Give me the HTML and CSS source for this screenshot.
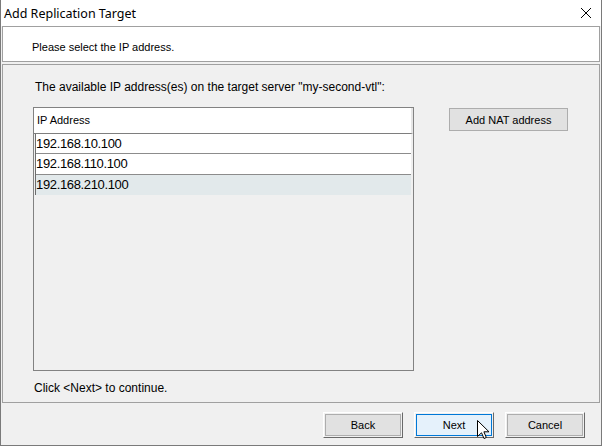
FILE: index.html
```html
<!DOCTYPE html>
<html lang="en">
<head>
  <meta charset="UTF-8" />
  <meta name="viewport" content="width=device-width, initial-scale=1.0"/>
  <title>Add Replication Target</title>
  <link rel="stylesheet" href="styles.css">
</head>
<body>
  <div class="window">
    <div class="titlebar">
      <div class="title">Add Replication Target</div>
      <div class="close">
        <svg width="12" height="12" viewBox="0 0 12 12">
          <path d="M1 1 L11 11 M11 1 L1 11" stroke="#000" stroke-width="1" fill="none"/>
        </svg>
      </div>
    </div>

    <div class="content">
      <div class="header-box">
        <div class="header-text">Please select the IP address.</div>
      </div>

      <div class="main-panel">
        <div class="intro">The available IP address(es) on the target server "my-second-vtl":</div>

        <div class="list-row">
          <div class="list">
            <div class="list-head">IP Address</div>
            <div class="rows">
              <div class="row">192.168.10.100</div>
              <div class="row">192.168.110.100</div>
              <div class="row selected">192.168.210.100</div>
            </div>
          </div>
          <button class="btn nat-btn">Add NAT address</button>
        </div>

        <div class="hint">Click &lt;Next&gt; to continue.</div>
      </div>

      <div class="footer">
        <button class="btn">Back</button>
        <button class="btn primary">Next</button>
        <button class="btn">Cancel</button>
      </div>
    </div>

    <svg class="cursor" width="13" height="20" viewBox="0 0 13 20">
      <path d="M0.5 0.5 L0.5 16.5 L4.5 12.8 L7 18.5 L9.3 17.5 L6.9 11.8 L12 11.8 Z" fill="#fff" stroke="#000" stroke-width="1" stroke-linejoin="miter"/>
    </svg>
  </div>
</body>
</html>
```

FILE: styles.css
```css
body {
  margin: 0;
  background: #f0f0f0;
  font-family: 'Liberation Sans', Arial, sans-serif;
  font-size: 11px;
  color: #000;
}

.window {
  position: relative;
  width: 602px;
  height: 446px;
  box-sizing: border-box;
  border: 1px solid #7a7a7a;
  border-top: none;
  background: #f0f0f0;
  overflow: hidden;
}

.titlebar {
  height: 26px;
  background: #fff;
  display: flex;
  align-items: center;
  justify-content: space-between;
  margin: 0 -1px;
  padding: 0 10px 0 4px;
}

.title {
  font-family: 'Noto Sans', sans-serif;
  font-size: 12.5px;
}

.close {
  display: flex;
  align-items: center;
  width: 12px;
  height: 12px;
}

.content {
  padding: 0 1px;
}

.header-box {
  height: 36px;
  box-sizing: border-box;
  border: 1px solid #a0a0a0;
  background: #fff;
  display: flex;
  align-items: center;
  padding: 5px 0 0 29px;
}

.header-text {
  font-size: 11px;
}

.main-panel {
  margin-top: 2px;
  height: 339px;
  box-sizing: border-box;
  border: 1px solid #a0a0a0;
  padding: 16px 0 0 30px;
}

.intro {
  margin-left: 2px;
  font-size: 12px;
  line-height: 13px;
}

.list-row {
  display: flex;
  align-items: flex-start;
  margin-top: 13px;
}

.list {
  width: 381px;
  height: 264px;
  box-sizing: border-box;
  border: 1px solid #828282;
  background: #f0f0f0;
}

.list-head {
  height: 25px;
  line-height: 25px;
  background: #fff;
  border-right: 2px solid #e6e6e6;
  border-bottom: 1px solid #7e7e7e;
  padding-left: 3px;
}

.rows {
  margin-left: 1px;
  margin-right: 2px;
  border-left: 1px solid #6e6e6e;
}

.row {
  height: 20px;
  line-height: 20px;
  background: #fff;
  font-size: 13px;
  letter-spacing: -0.35px;
  border-top: 1px solid #8c8c8c;
}

.row:first-child {
  height: 19px;
  line-height: 19px;
  border-top: none;
}

.row.selected {
  background: #e2e9eb;
}

.btn {
  font-family: 'Liberation Sans', Arial, sans-serif;
  font-size: 11px;
  color: #000;
  background: #e1e1e1;
  box-sizing: border-box;
  padding: 0;
}

.nat-btn {
  margin-left: 35px;
  margin-top: 1px;
  width: 119px;
  height: 23px;
  border: 1px solid #adadad;
}

.hint {
  margin-top: 11px;
  margin-left: 1px;
  font-size: 12px;
  line-height: 13px;
}

.footer {
  height: 41px;
  display: flex;
  justify-content: flex-end;
  align-items: flex-start;
  gap: 11px;
  padding: 9px 15px 0 0;
  box-sizing: border-box;
}

.footer .btn {
  width: 80px;
  height: 26px;
  border: 1px solid;
  border-color: #fff #696969 #696969 #fff;
  box-shadow: inset 0 0 0 1px #f0f0f0, inset 0 0 0 2px #adadad;
}

.footer .btn.primary {
  background: #e5f1fb;
  box-shadow: inset 0 0 0 1px #f0f0f0, inset 0 0 0 2px #0078d7;
}

.cursor {
  position: absolute;
  left: 476px;
  top: 420px;
}
```
